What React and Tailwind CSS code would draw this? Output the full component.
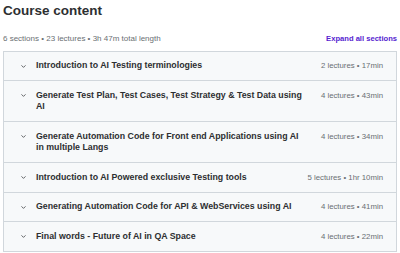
import { ChevronDown } from 'lucide-react';

const sections = [
  { title: 'Introduction to AI Testing terminologies', meta: '2 lectures • 17min' },
  { title: 'Generate Test Plan, Test Cases, Test Strategy & Test Data using AI', meta: '4 lectures • 43min' },
  { title: 'Generate Automation Code for Front end Applications using AI in multiple Langs', meta: '4 lectures • 34min' },
  { title: 'Introduction to AI Powered exclusive Testing tools', meta: '5 lectures • 1hr 10min' },
  { title: 'Generating Automation Code for API & WebServices using AI', meta: '4 lectures • 41min' },
  { title: 'Final words - Future of AI in QA Space', meta: '4 lectures • 22min' },
];

export default function App() {
  return (
    <div className="w-[400px] h-[253px] bg-white overflow-hidden px-[3px] text-[#2d2f31]" style={{ fontFamily: '"Liberation Sans", Arial, sans-serif' }}>
      <h2 className="text-[13.5px] font-bold leading-none pt-[4px]">Course content</h2>

      <div className="flex items-end justify-between mt-[17px]">
        <p className="text-[8px] text-[#6a6f73] leading-none">6 sections • 23 lectures • 3h 47m total length</p>
        <button className="text-[7.6px] font-bold text-[#5624d0] leading-none">Expand all sections</button>
      </div>

      {/* Sections */}
      <div className="mt-[8px] border border-[#d1d7dc]">
        {sections.map((s, i) => (
          <div key={i} className={`flex items-start bg-[#f7f9fa] pl-[16px] pr-[13px] py-[8.5px] ${i > 0 ? 'border-t border-[#d1d7dc]' : ''}`}>
            <ChevronDown className="w-[7px] h-[7px] mt-[2.5px] shrink-0 text-[#2d2f31]" strokeWidth={2.5} />
            <div className="w-[272px] ml-[9px] text-[8.8px] font-bold leading-[11.5px]">{s.title}</div>
            <div className="ml-auto shrink-0 text-[7.8px] text-[#6a6f73] leading-[11.5px]">{s.meta}</div>
          </div>
        ))}
      </div>
    </div>
  );
}
